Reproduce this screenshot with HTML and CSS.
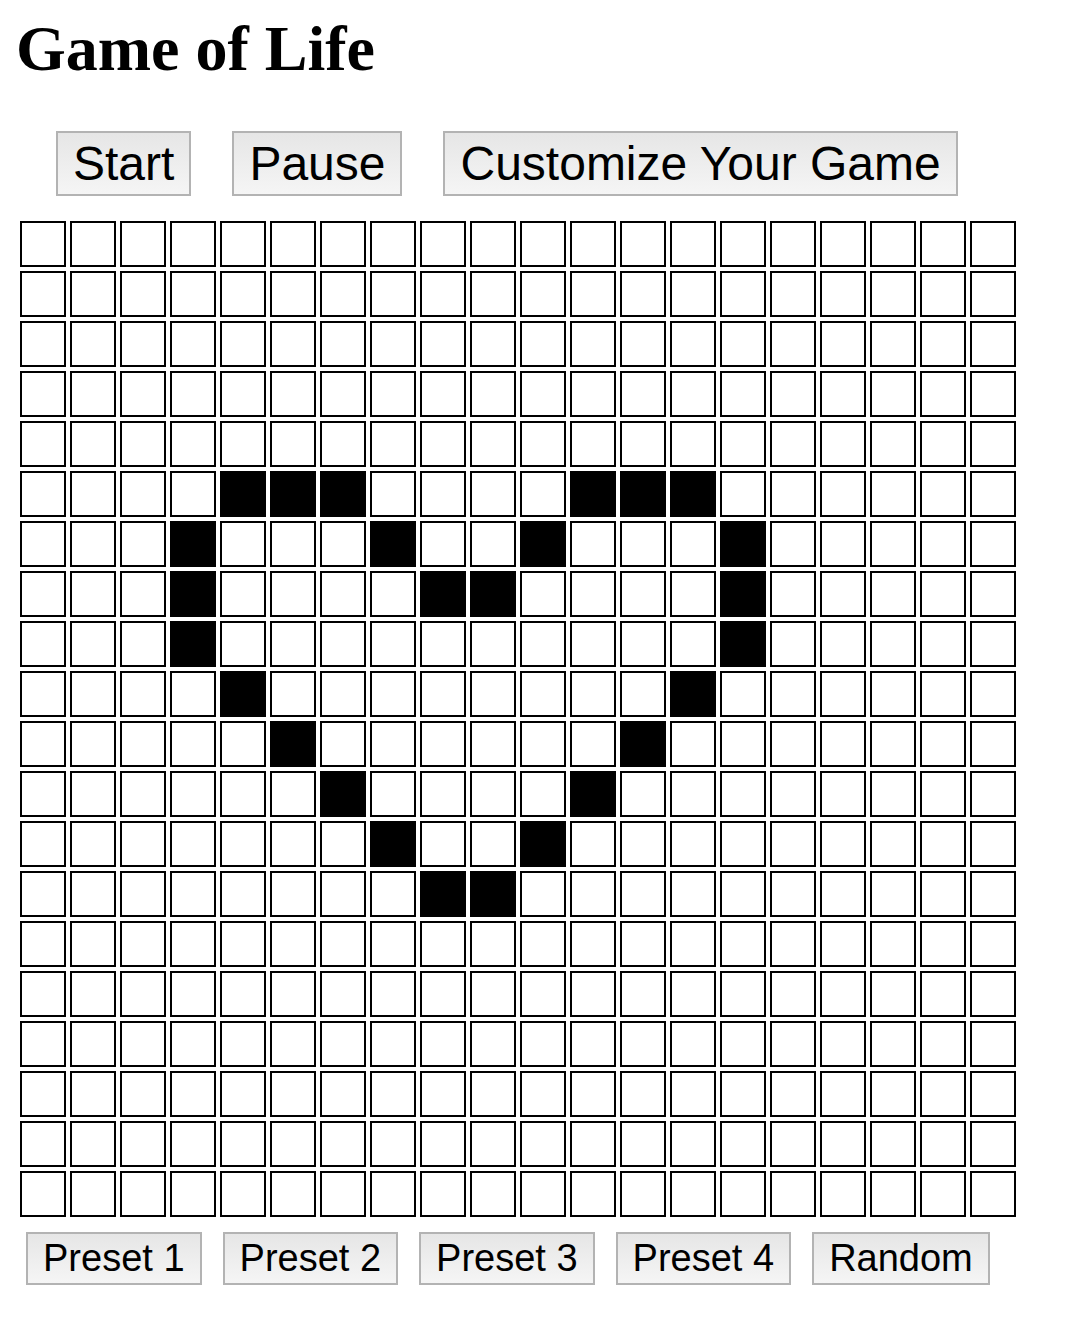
FILE: index.html
```html
<!DOCTYPE html>
<html>
<head>
<meta charset="utf-8">
<title>Game of Life</title>
<link rel="stylesheet" href="styles.css">
</head>
<body>
<h1 class="title">Game of Life</h1>
<div class="controls">
  <button class="btn btn-lg">Start</button>
  <button class="btn btn-lg">Pause</button>
  <button class="btn btn-lg">Customize Your Game</button>
</div>
<div class="board" id="board"></div>
<div class="presets">
  <button class="btn btn-sm">Preset 1</button>
  <button class="btn btn-sm">Preset 2</button>
  <button class="btn btn-sm">Preset 3</button>
  <button class="btn btn-sm">Preset 4</button>
  <button class="btn btn-sm">Random</button>
</div>
<script src="app.js"></script>
</body>
</html>
```
FILE: styles.css
```css
html, body {
  margin: 0;
  padding: 0;
  background: #ffffff;
}
body {
  padding: 12px 0 0 0;
  font-family: "Liberation Serif", "Times New Roman", serif;
}
.title {
  margin: 0 0 0 16px;
  font-size: 64px;
  font-weight: bold;
  line-height: normal;
  color: #000;
}
.controls {
  display: flex;
  gap: 41px;
  padding-left: 56px;
  margin-top: 45px;
}
.btn {
  font-family: "Liberation Sans", Arial, Helvetica, sans-serif;
  color: #000;
  border: 2px solid #b3b3b3;
  border-radius: 0;
  background: linear-gradient(to bottom, #e6e6e6, #f5f5f5);
  padding: 3px 15px;
  margin: 0;
  line-height: normal;
}
.btn-lg {
  font-size: 48px;
}
.btn-sm {
  font-size: 38px;
}
.board {
  display: grid;
  grid-template-columns: repeat(20, 46px);
  grid-auto-rows: 46px;
  gap: 4px;
  margin: 25px 0 0 20px;
  width: max-content;
}
.cell {
  box-sizing: border-box;
  border: 2px solid #000;
  background: #fff;
}
.cell.alive {
  background: #000;
}
.presets {
  display: flex;
  gap: 21px;
  padding-left: 26px;
  margin-top: 15px;
}
```
FILE: app.js
```js
(function () {
  var alive = {
    5: [4, 5, 6, 11, 12, 13],
    6: [3, 7, 10, 14],
    7: [3, 8, 9, 14],
    8: [3, 14],
    9: [4, 13],
    10: [5, 12],
    11: [6, 11],
    12: [7, 10],
    13: [8, 9]
  };
  var board = document.getElementById('board');
  for (var r = 0; r < 20; r++) {
    for (var c = 0; c < 20; c++) {
      var d = document.createElement('div');
      d.className = 'cell';
      if (alive[r] && alive[r].indexOf(c) !== -1) d.className += ' alive';
      board.appendChild(d);
    }
  }
})();
```
